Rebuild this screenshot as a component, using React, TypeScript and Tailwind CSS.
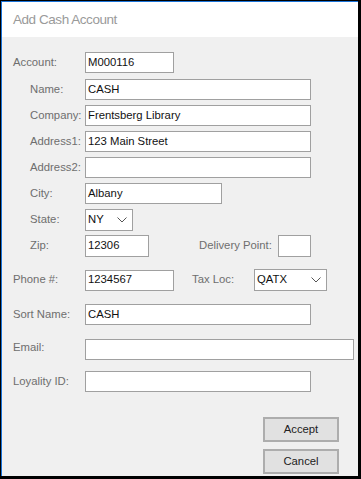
import React from "react";

const F = { fontFamily: '"Liberation Sans", Arial, sans-serif' };

function Input({ w, value, h = 21 }: { w: number; value?: string; h?: number }) {
  return (
    <div
      className="bg-white border border-[#a0a0a0] flex items-center pl-[2px] text-[11.3px] text-[#111] leading-none"
      style={{ width: w, height: h }}
    >
      {value}
    </div>
  );
}

function Select({ w, value }: { w: number; value: string }) {
  return (
    <div
      className="bg-white border border-[#a0a0a0] flex items-center justify-between pl-[2px] pr-[5px] h-[22px] text-[11.3px] text-[#111] leading-none"
      style={{ width: w }}
    >
      <span>{value}</span>
      <svg width="10" height="6" viewBox="0 0 10 6" fill="none">
        <path d="M0.5 0.5 L5 5 L9.5 0.5" stroke="#555" strokeWidth="1" />
      </svg>
    </div>
  );
}

function Label({ text, w }: { text: string; w: number }) {
  return (
    <div className="text-[11.3px] text-[#6e6e6e] leading-none shrink-0" style={{ width: w }}>
      {text}
    </div>
  );
}

export default function App() {
  return (
    <div className="w-[361px] h-[479px] bg-black pl-[1px] pt-[1px] pr-[3px] pb-[3px]" style={F}>
      <div className="w-full h-full border-l border-t border-[#1a73d9] bg-[#f0f0f0] flex flex-col">
        <div className="h-[35px] bg-white flex items-center pl-[11px] pt-[2px] shrink-0">
          <span className="text-[13.5px] tracking-[-0.45px] text-[#9a9a9a]">Add Cash Account</span>
        </div>
        <div className="flex flex-col pl-[11px]">
          <div className="flex items-center mt-[15px]">
            <Label text="Account:" w={72} />
            <Input w={89} value="M000116" />
          </div>
          <div className="flex items-center mt-[6px] pl-[17px]">
            <Label text="Name:" w={55} />
            <Input w={226} value="CASH" />
          </div>
          <div className="flex items-center mt-[5px] pl-[17px]">
            <Label text="Company:" w={55} />
            <Input w={226} value="Frentsberg Library" />
          </div>
          <div className="flex items-center mt-[5px] pl-[17px]">
            <Label text="Address1:" w={55} />
            <Input w={226} value="123 Main Street" />
          </div>
          <div className="flex items-center mt-[5px] pl-[17px]">
            <Label text="Address2:" w={55} />
            <Input w={226} />
          </div>
          <div className="flex items-center mt-[5px] pl-[17px]">
            <Label text="City:" w={55} />
            <Input w={137} value="Albany" />
          </div>
          <div className="flex items-center mt-[5px] pl-[17px]">
            <Label text="State:" w={55} />
            <Select w={48} value="NY" />
          </div>
          <div className="flex items-center mt-[4px] pl-[17px]">
            <Label text="Zip:" w={55} />
            <Input w={64} h={22} value="12306" />
            <div className="ml-[50px]">
              <Label text="Delivery Point:" w={79} />
            </div>
            <Input w={33} h={22} />
          </div>
          <div className="flex items-center mt-[12px]">
            <Label text="Phone #:" w={72} />
            <Input w={89} value="1234567" />
            <div className="ml-[18px]">
              <Label text="Tax Loc:" w={62} />
            </div>
            <Select w={73} value="QATX" />
          </div>
          <div className="flex items-center mt-[13px]">
            <Label text="Sort Name:" w={72} />
            <Input w={226} value="CASH" />
          </div>
          <div className="flex items-center mt-[14px]">
            <div className="-mt-[4px]">
              <Label text="Email:" w={72} />
            </div>
            <Input w={269} />
          </div>
          <div className="flex items-center mt-[11px]">
            <Label text="Loyality ID:" w={72} />
            <Input w={226} />
          </div>
          <div className="flex flex-col items-start pl-[250px] mt-[25px] gap-[7px]">
            <button className="w-[76px] h-[25px] bg-[#e1e1e1] border-2 border-[#adadad] text-[11.3px] text-[#222] leading-none">
              Accept
            </button>
            <button className="w-[76px] h-[25px] bg-[#e1e1e1] border-2 border-[#adadad] text-[11.3px] text-[#222] leading-none">
              Cancel
            </button>
          </div>
        </div>
      </div>
    </div>
  );
}
